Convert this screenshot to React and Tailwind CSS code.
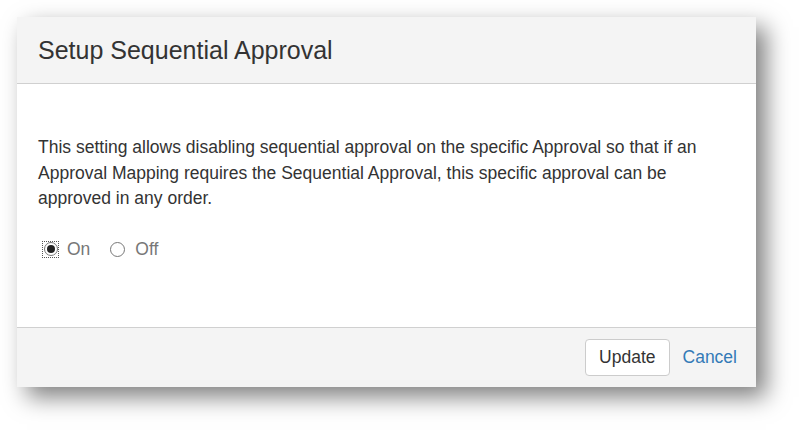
export default function App() {
  return (
    <div className="w-[804px] h-[435px] bg-white pt-[17px] pl-[17px]" style={{ fontFamily: '"Liberation Sans", Arial, sans-serif' }}>
      <div className="w-[739px] h-[370px] flex flex-col bg-white shadow-[10px_10px_22px_rgba(0,0,0,0.5)]">
        {/* Header */}
        <div className="h-[67px] shrink-0 bg-[#f4f4f4] border-b border-[#d0d0d0] flex items-center px-[21px]">
          <h1 className="text-[25px] text-[#333] leading-none">Setup Sequential Approval</h1>
        </div>

        {/* Body */}
        <div className="flex-1 px-[21px] pt-[51px]">
          <p className="text-[17.5px] leading-[25.7px] text-[#333]">
            This setting allows disabling sequential approval on the specific Approval so that if an Approval Mapping requires the Sequential Approval, this specific approval can be approved in any order.
          </p>
          <div className="flex items-center mt-[24px] ml-[4px] text-[17.5px] text-[#777]">
            <label className="flex items-center gap-[8px]">
              <span className="w-[17px] h-[17px] flex items-center justify-center border border-dotted border-[#555]">
                <span className="w-[14px] h-[14px] rounded-full border border-[#777] bg-white flex items-center justify-center">
                  <span className="w-[8px] h-[8px] rounded-full bg-[#222]" />
                </span>
              </span>
              On
            </label>
            <label className="flex items-center gap-[10px] ml-[20px]">
              <span className="w-[15px] h-[15px] rounded-full border border-[#777] bg-white" />
              Off
            </label>
          </div>
        </div>

        {/* Footer */}
        <div className="h-[60px] shrink-0 bg-[#f4f4f4] border-t border-[#d0d0d0] flex items-center justify-end pr-[19px] gap-[13px]">
          <button className="h-[37px] px-[13px] bg-white border border-[#ccc] rounded-[4px] text-[17.5px] text-[#333]">
            Update
          </button>
          <a href="#" className="text-[17.5px] text-[#337ab7]">Cancel</a>
        </div>
      </div>
    </div>
  );
}
